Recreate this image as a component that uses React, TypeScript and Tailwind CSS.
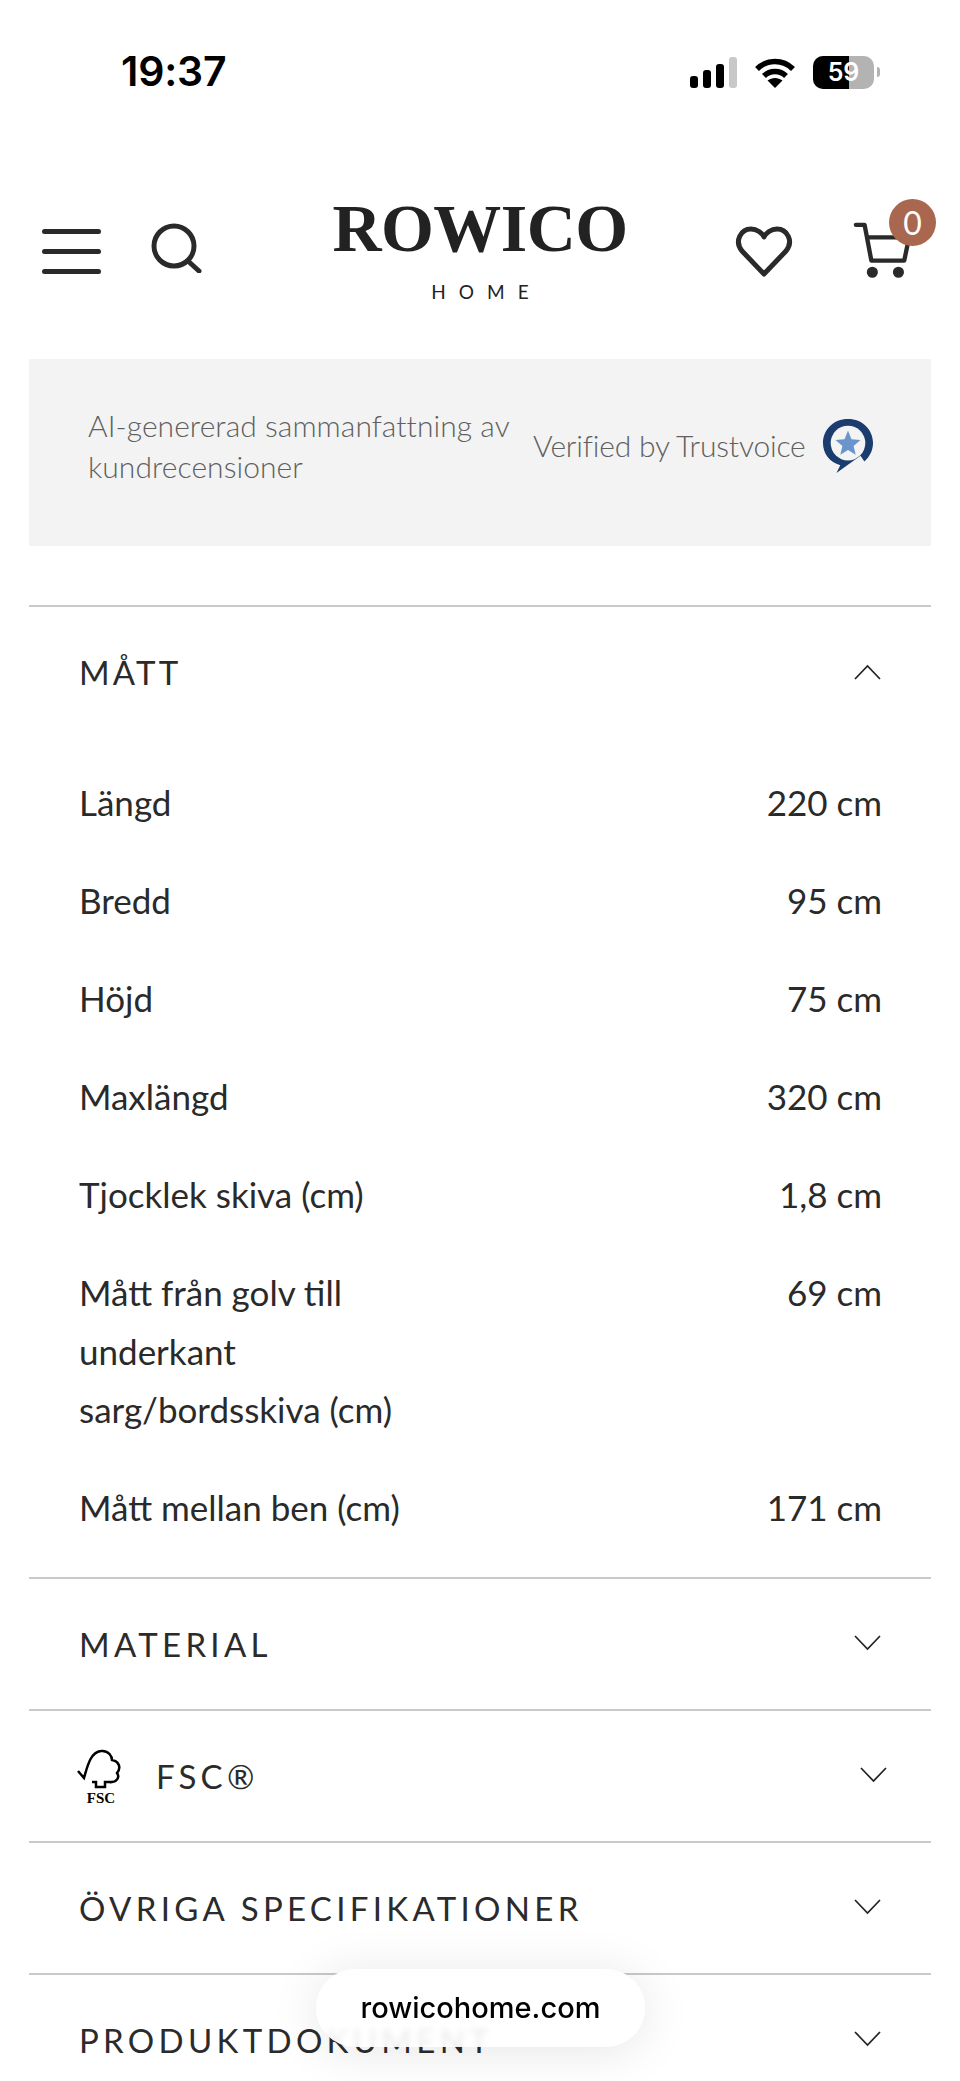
function Chevron({ up = false }: { up?: boolean }) {
  return (
    <svg width="27" height="16" viewBox="0 0 27 16" fill="none" stroke="#222" strokeWidth="1.7" className="shrink-0">
      <polyline points={up ? "1,15 13.5,2 26,15" : "1,1 13.5,14 26,1"} />
    </svg>
  );
}

function Section({ title, children, shift = false }: { title: string; children?: React.ReactNode; shift?: boolean }) {
  return (
    <div className="border-t-2 border-[#c9c9c9] h-[132px] flex items-center justify-between pl-[50px] pr-[50px]">
      <div className="flex items-center pt-[2px]">
        {children}
        <span className="text-[33px] tracking-[4.3px] text-[#2b2b2b] font-normal">{title}</span>
      </div>
      <div className={shift ? "-mr-[6px] pb-[1px]" : "pb-[1px]"}>
        <Chevron />
      </div>
    </div>
  );
}

const rows: [React.ReactNode, string][] = [
  ["Längd", "220 cm"],
  ["Bredd", "95 cm"],
  ["Höjd", "75 cm"],
  ["Maxlängd", "320 cm"],
  ["Tjocklek skiva (cm)", "1,8 cm"],
  [
    <>
      Mått från golv till
      <br />
      underkant
      <br />
      sarg/bordsskiva (cm)
    </>,
    "69 cm",
  ],
  ["Mått mellan ben (cm)", "171 cm"],
];

export default function App() {
  return (
    <div className="relative w-[960px] h-[2081px] overflow-hidden bg-white font-['Lato',sans-serif] text-[#1f1f1f]">
      {/* Status bar */}
      <div className="h-[144px] flex items-center justify-between pl-[121px] pr-[80px] font-['Inter',sans-serif]">
        <span className="text-[41px] font-semibold text-black tracking-[-0.2px]">19:37</span>
        <div className="flex items-center gap-[17px]">
          <svg width="47" height="31" viewBox="0 0 47 31">
            <rect x="0" y="19" width="8" height="12" rx="3" fill="#000" />
            <rect x="13" y="13" width="8" height="18" rx="3" fill="#000" />
            <rect x="26" y="7" width="8" height="24" rx="3" fill="#000" />
            <rect x="39" y="0" width="8" height="31" rx="3" fill="#c8c8c8" />
          </svg>
          <svg width="42" height="31" viewBox="0 0 42 31" fill="none" stroke="#000" strokeWidth="5.5">
            <path d="M3 12 C13 2 29 2 39 12" />
            <path d="M10 19 C16 13 26 13 32 19" />
            <path d="M21 31 L13.5 23.5 C18 20 24 20 28.5 23.5 Z" fill="#000" stroke="none" />
          </svg>
          <div className="relative flex items-center">
            <div className="relative w-[61px] h-[33px] rounded-[10px] bg-[#b3b3b3] overflow-hidden flex items-center justify-center">
              <div className="absolute left-0 top-0 bottom-0 w-[36px] bg-black" />
              <span className="relative text-[25px] font-semibold text-white leading-none">59</span>
            </div>
            <div className="w-[3px] h-[10px] ml-[3px] rounded-r-full bg-[#b3b3b3]" />
          </div>
        </div>
      </div>

      {/* Header */}
      <div className="h-[215px] grid grid-cols-[1fr_auto_1fr] px-[22px]">
        <div className="flex items-start pl-[20px] pt-[79px] gap-[50px]">
          <div className="flex flex-col gap-[15px] w-[59px] pt-[6px]">
            <div className="h-[5px] rounded-full bg-[#2a2a2a]" />
            <div className="h-[5px] rounded-full bg-[#2a2a2a]" />
            <div className="h-[5px] rounded-full bg-[#2a2a2a]" />
          </div>
          <svg width="52" height="50" viewBox="0 0 52 50" fill="none" stroke="#2a2a2a" strokeWidth="5" strokeLinecap="round">
            <circle cx="23" cy="23" r="20" />
            <path d="M37 38 L48 48" />
          </svg>
        </div>
        <div className="flex flex-col items-center pt-[50px]">
          <div className="font-['Liberation_Serif',serif] font-bold text-[68px] leading-[68px] text-[#222] tracking-[-0.6px]">ROWICO</div>
          <div className="mt-[19px] text-[19px] leading-[22px] tracking-[13px] mr-[-13px] text-[#222]">HOME</div>
        </div>
        <div className="flex items-start justify-end pt-[56px]">
          <svg width="58" height="52" viewBox="0 0 58 52" fill="none" stroke="#2a2a2a" strokeWidth="5" strokeLinejoin="round" className="mt-[26px]">
            <path d="M29 48 L7 25 C-1 15 6 3 16 3 C22 3 27 7 29 11 C31 7 36 3 42 3 C52 3 59 15 51 25 Z" />
          </svg>
          <div className="relative ml-[60px] mr-[2px] w-[83px] h-[90px]">
            <svg width="58" height="58" viewBox="0 0 60 58" fill="none" stroke="#2a2a2a" strokeWidth="4.5" strokeLinecap="round" strokeLinejoin="round" className="absolute left-0 top-[21px]">
              <path d="M3 3 H12 L19 40 H53 L58 16 H15" />
              <circle cx="20" cy="52" r="3.5" fill="#2a2a2a" />
              <circle cx="47" cy="52" r="3.5" fill="#2a2a2a" />
            </svg>
            <div className="absolute right-0 top-[-1px] w-[47px] h-[47px] rounded-full bg-[#a9674f] flex items-center justify-center text-white text-[32px] leading-none">0</div>
          </div>
        </div>
      </div>

      {/* Review summary */}
      <div className="mx-[29px] h-[187px] bg-[#f3f3f3] flex items-center pl-[59px] pb-[14px] text-[#5f5f5f] text-[30px] leading-[41px] font-light">
        <div className="w-[445px] shrink-0 tracking-[0.05px]">
          AI-genererad sammanfattning av
          <br />
          kundrecensioner
        </div>
        <div className="tracking-[-0.2px] whitespace-nowrap">Verified by Trustvoice</div>
        <svg width="52" height="58" viewBox="0 0 54 58" className="ml-[16px] shrink-0">
          <path d="M27 1 C42 1 53 12 53 26 C53 34 49 41 44 45 L40 39 L15 57 L19 49 C8 46 1 37 1 26 C1 12 12 1 27 1 Z" fill="#1b3c6e" />
          <circle cx="27" cy="26" r="18" fill="#f3f3f3" />
          <path d="M27 13 L30.6 21.9 L40 22.7 L32.8 28.9 L35 38 L27 33.2 L19 38 L21.2 28.9 L14 22.7 L23.4 21.9 Z" fill="#6a94cc" />
        </svg>
      </div>

      {/* Accordion */}
      <div className="mx-[29px] mt-[59px]">
        <div className="border-t-2 border-[#c9c9c9] h-[132px] flex items-center justify-between pl-[50px] pr-[50px]">
          <span className="pt-[2px] text-[33px] tracking-[3.2px] text-[#2b2b2b]">MÅTT</span>
          <Chevron up />
        </div>
        <div className="flex flex-col gap-[39.4px] pl-[50px] pr-[49px] pt-[36px] pb-[40px] text-[35px] leading-[58.6px] text-[#2a2a2a]">
          {rows.map(([label, value], i) => (
            <div key={i} className="flex justify-between">
              <div>{label}</div>
              <div>{value}</div>
            </div>
          ))}
        </div>
        <Section title="MATERIAL" />
        <Section title="FSC®" shift>
          <svg width="46" height="56" viewBox="0 0 46 56" className="mr-[33px] -ml-[2px]">
            <path d="M1 22 L7 29 C10 19 13 3 24 2 C32 1 35 8 35 11 C41 12 45 18 40 24 C43 28 40 34 32 33 L28 33 L28 38 L19 38 L19 33 L15 33" fill="none" stroke="#000" strokeWidth="2.5" />
            <text x="24" y="54" textAnchor="middle" fontSize="15" fontWeight="700" fontFamily="Liberation Serif, serif" fill="#000">FSC</text>
          </svg>
        </Section>
        <Section title="ÖVRIGA SPECIFIKATIONER" />
        <Section title="PRODUKTDOKUMENT" />
      </div>

      {/* Browser address pill */}
      <div className="absolute left-[316px] top-[1969px] w-[329px] h-[78px] rounded-[39px] bg-white/90 backdrop-blur-[3px] shadow-[0_4px_50px_rgba(0,0,0,0.1)] flex items-center justify-center font-['Inter',sans-serif] font-medium text-[29px] text-black">
        rowicohome.com
      </div>
    </div>
  );
}
